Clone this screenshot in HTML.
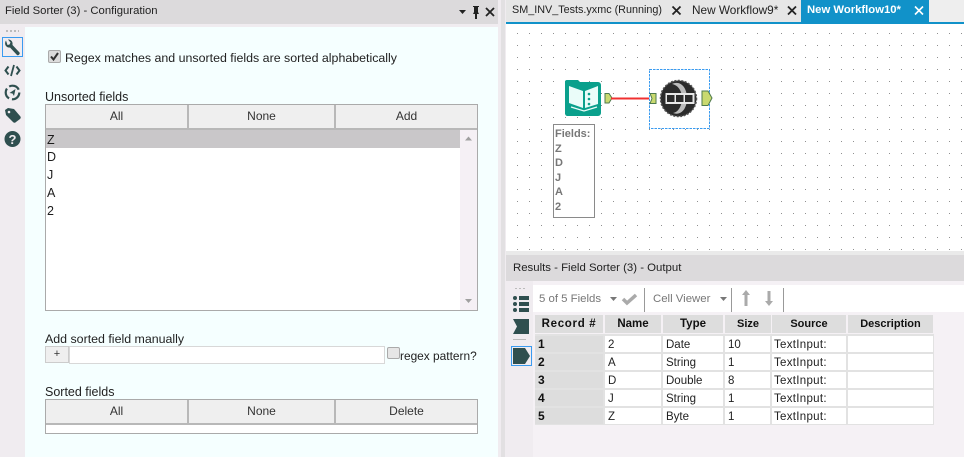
<!DOCTYPE html>
<html><head><meta charset="utf-8"><style>
html,body{margin:0;padding:0;width:964px;height:457px;overflow:hidden;background:#f0ecf0}
body{position:relative;font-family:"Liberation Sans",sans-serif;font-size:12px;color:#1c1c1c}
.a{position:absolute;box-sizing:border-box}
.t{position:absolute;white-space:nowrap;line-height:14px}
.b{position:absolute;box-sizing:border-box;background:#efefef;text-align:center;color:#333;font-size:12px;line-height:22px;height:23px}
.c{position:absolute;box-sizing:border-box;height:16px;background:#fff;font-size:11.5px;line-height:18px;padding-left:3px;color:#222;white-space:nowrap;overflow:hidden}
.s{padding-left:2px;letter-spacing:.3px}
.h{position:absolute;box-sizing:border-box;height:18px;background:#dddddd;font-weight:bold;font-size:11px;line-height:19px;text-align:center;color:#111;white-space:nowrap}
.r{background:#dddddd;font-weight:bold;font-size:12px;color:#111;line-height:16px}
</style></head><body>
<!-- left header -->
<div class="a" style="left:0;top:0;width:501px;height:24px;background:#dcdadc"></div>
<div class="t" style="left:5px;top:4px;font-size:11.300px;color:#222">Field Sorter (3) - Configuration</div>
<svg class="a" style="left:455px;top:2px" width="45" height="20" viewBox="0 0 45 20">
<path d="M4 8h7l-3.500 4z" fill="#222"/>
<path d="M18 4h6v1h-1v5l1 2h-2v5h-2v-5h-2l1-2V5h-1z" fill="#222"/>
<path d="M31 6l8 8M39 6l-8 8" stroke="#222" stroke-width="1.800" fill="none"/>
</svg>
<!-- config panel -->
<div class="a" style="left:25px;top:27px;width:473px;height:430px;background:#f5ffff"></div>
<div class="a" style="left:498px;top:0;width:7px;height:457px;background:#f0ecf0"></div>
<div class="a" style="left:501px;top:0;width:4px;height:457px;background:#e2e0e2"></div>
<!-- sidebar -->
<div class="a" style="left:6px;top:30px;width:13px;height:2px;background-image:linear-gradient(90deg,#bbb 2px,transparent 2px);background-size:4px 2px"></div>
<div class="a" style="left:2px;top:37px;width:21px;height:20px;border:1px solid #3a9bf0"></div>
<svg class="a" style="left:2px;top:37px" width="21" height="125" viewBox="0 0 21 125">
<path d="M4 3.500a4.500 4.500 0 0 0 1 6.500a4.500 4.500 0 0 0 3 .5l7 7.500c1 1 3.500-1 2.500-2.500l-7-7.500a4.500 4.500 0 0 0-.5-3.500a4.500 4.500 0 0 0-4-2l2.500 3l-1 2l-2 .5z" fill="#2f4f4f"/>
<path d="M6.500 29.500l-3 4 3 4M14.500 29.500l3 4-3 4" stroke="#2f4f4f" stroke-width="2" fill="none"/>
<path d="M12 28l-3 11" stroke="#2f4f4f" stroke-width="1.800"/>
<circle cx="10.500" cy="55.500" r="6.800" fill="none" stroke="#2f4f4f" stroke-width="2.200" stroke-dasharray="11.200 3"/>
<path d="M13.500 52l-1.500 7-1.500-2.500-3-.5z" fill="#2f4f4f"/>
<path d="M3 73l3-2 6 1 6 7c1 1 1 2 0 3l-4 3c-1 1-2 1-3 0l-7-7z" fill="#2f4f4f"/>
<circle cx="7" cy="75" r="1.300" fill="#f0ecf0"/>
<circle cx="10.500" cy="102" r="8" fill="#2f4f4f"/>
<text x="10.500" y="107" font-family="Liberation Sans" font-size="13" font-weight="bold" fill="#f0ecf0" text-anchor="middle">?</text>
</svg>
<!-- checkbox -->
<div class="a" style="left:48px;top:50px;width:13px;height:13px;background:#dcdcdc;border:1px solid #aaa;border-radius:2px"></div>
<svg class="a" style="left:48px;top:50px" width="13" height="13"><path d="M3 6.500l2.500 3L10 3" stroke="#333" stroke-width="2" fill="none"/></svg>
<div class="t" style="left:65px;top:51px;font-size:12.400px;color:#222">Regex matches and unsorted fields are sorted alphabetically</div>
<div class="t" style="left:45px;top:90px;font-size:12.500px;color:#222">Unsorted fields</div>
<!-- unsorted -->
<div class="a" style="left:45px;top:104px;width:433px;height:207px;background:#fff;border:1px solid #aaa"></div>
<div class="a" style="left:46px;top:128px;width:431px;height:2px;background:#b8b8b8"></div>
<div class="b" style="left:46px;top:105px;width:141px">All</div>
<div class="a" style="left:187px;top:105px;width:2px;height:23px;background:#b8b8b8"></div>
<div class="b" style="left:189px;top:105px;width:145px">None</div>
<div class="a" style="left:334px;top:105px;width:2px;height:23px;background:#b8b8b8"></div>
<div class="b" style="left:336px;top:105px;width:141px">Add</div>
<div class="a" style="left:46px;top:130px;width:414px;height:18px;background:#c9c7c9"></div>
<div class="a" style="left:460px;top:130px;width:17px;height:180px;background:#f5f0f5"></div>
<svg class="a" style="left:460px;top:130px" width="17" height="180"><path d="M5 10.500h7L8.500 6.500z" fill="#a0a0a0"/><path d="M5 169h7l-3.500 4z" fill="#a0a0a0"/></svg>
<div class="t" style="left:47px;top:133px;font-size:12.500px">Z</div>
<div class="t" style="left:47px;top:150px;font-size:12.500px">D</div>
<div class="t" style="left:47px;top:168px;font-size:12.500px">J</div>
<div class="t" style="left:47px;top:186px;font-size:12.500px">A</div>
<div class="t" style="left:47px;top:204px;font-size:12.500px">2</div>
<!-- manual -->
<div class="t" style="left:45px;top:332px;font-size:12.400px;color:#222">Add sorted field manually</div>
<div class="a" style="left:45px;top:346px;width:24px;height:17px;background:#efefef;border:1px solid #ccc;text-align:center;font-size:11px;line-height:15px;color:#333">+</div>
<div class="a" style="left:69px;top:346px;width:316px;height:18px;background:#fff;border:1px solid #d8d8d8"></div>
<div class="a" style="left:387px;top:347px;width:13px;height:12px;background:#e6e6e6;border:1px solid #aaa;border-radius:2px"></div>
<div class="t" style="left:400px;top:349px;font-size:11.900px;color:#222">regex pattern?</div>
<!-- sorted -->
<div class="t" style="left:45px;top:385px;font-size:12.500px;color:#222">Sorted fields</div>
<div class="a" style="left:45px;top:399px;width:433px;height:35px;background:#fff;border:1px solid #aaa"></div>
<div class="a" style="left:46px;top:423px;width:431px;height:2px;background:#b8b8b8"></div>
<div class="b" style="left:46px;top:400px;width:141px">All</div>
<div class="a" style="left:187px;top:400px;width:2px;height:23px;background:#b8b8b8"></div>
<div class="b" style="left:189px;top:400px;width:145px">None</div>
<div class="a" style="left:334px;top:400px;width:2px;height:23px;background:#b8b8b8"></div>
<div class="b" style="left:336px;top:400px;width:141px">Delete</div>
<!-- tabs -->
<div class="a" style="left:506px;top:0;width:458px;height:22px;background:#e6e6e6"></div>
<div class="a" style="left:929px;top:0;width:35px;height:22px;background:#eeeeee"></div>
<div class="a" style="left:506px;top:22px;width:458px;height:2px;background:#1192c9"></div>
<div class="a" style="left:801px;top:0;width:128px;height:23px;background:#1192c9"></div>
<div class="t" style="left:512px;top:3px;font-size:10.800px;color:#222">SM_INV_Tests.yxmc (Running)</div>
<div class="t" style="left:692px;top:3px;font-size:11.800px;color:#222">New Workflow9*</div>
<div class="t" style="left:807px;top:3px;font-size:11.300px;font-weight:bold;color:#fff">New Workflow10*</div>
<svg class="a" style="left:670px;top:3px" width="255" height="16">
<path d="M2.500 3.500l8 8M10.500 3.500l-8 8" stroke="#222" stroke-width="1.800" fill="none"/>
<path d="M118 3.500l8 8M126 3.500l-8 8" stroke="#222" stroke-width="1.800" fill="none"/>
<path d="M245 3.500l8 8M253 3.500l-8 8" stroke="#fff" stroke-width="1.600" fill="none"/>
</svg>
<!-- canvas -->
<svg class="a" style="left:506px;top:24px" width="458" height="227" viewBox="506 24 458 227">
<defs><pattern id="d" x="1" y="9" width="12" height="12" patternUnits="userSpaceOnUse"><rect width="1" height="1" fill="#909090"/></pattern></defs>
<rect x="506" y="24" width="458" height="227" fill="#fff"/>
<rect x="506" y="24" width="458" height="227" fill="url(#d)"/>
<!-- selection -->
<rect x="649.500" y="69.500" width="60" height="59" fill="#fff" stroke="#3a9bf0" stroke-dasharray="2.500 1"/>
<!-- book tool -->
<path d="M567 80h11l2 2h18a3 3 0 0 1 3 3v28a3 3 0 0 1-3 3h-31a3 3 0 0 1-2-2V82a2 2 0 0 1 2-2z" fill="#0aa08c"/>
<path d="M569 86l14 5v17l-14-5zM585 91l13-5v18l-13 4z" fill="#eafcf9"/>
<circle cx="589" cy="94" r="1.300" fill="#0aa08c"/><circle cx="589" cy="99" r="1.300" fill="#0aa08c"/><circle cx="589" cy="104" r="1.300" fill="#0aa08c"/>
<path d="M571 107l13 4 13-4" stroke="#eafcf9" fill="none" stroke-width="1.200"/>
<!-- connector -->
<path d="M605 93.500h4l3 4.500-3 5h-4z" fill="#c9d96f" stroke="#4e7a4e"/>
<path d="M611 98.500h38" stroke="#f03030" stroke-width="2"/>
<path d="M650 93.500h6v10h-6l2-5z" fill="#c9d96f" stroke="#4e7a4e"/>
<!-- sorter -->
<circle cx="678.500" cy="98.500" r="18" fill="#2b2b2b" stroke="#555" stroke-width="1.500" stroke-dasharray="2 1.500"/>
<path d="M672 84c8-4 15 3 15 14s-6 18-14 15c6-1 9-8 9-15s-4-13-10-14z" fill="#bcbcbc"/>
<rect x="665.500" y="93" width="29" height="11" fill="#e8e8e8"/>
<rect x="667" y="95" width="7.500" height="7" fill="#2b2b2b"/><rect x="676" y="95" width="7.500" height="7" fill="#2b2b2b"/><rect x="685" y="95" width="7.500" height="7" fill="#2b2b2b"/>
<path d="M702 91h6l4 7-4 7.500h-6z" fill="#c9d96f" stroke="#4e7a4e"/>
<!-- annotation -->
<rect x="553.500" y="124.500" width="41" height="93" fill="#fff" stroke="#8a8a8a"/>
<g font-family="Liberation Sans" font-size="11" font-weight="bold" fill="#777">
<text x="555" y="137">Fields:</text><text x="555" y="152">Z</text><text x="555" y="166">D</text><text x="555" y="181">J</text><text x="555" y="195">A</text><text x="555" y="210">2</text>
</g>
</svg>
<!-- results -->
<div class="a" style="left:506px;top:251px;width:458px;height:4px;background:#eaeaea"></div>
<div class="a" style="left:506px;top:255px;width:458px;height:26px;background:#dcdadc"></div>
<div class="t" style="left:513px;top:261px;font-size:11.400px;color:#222">Results - Field Sorter (3) - Output</div>
<div class="a" style="left:506px;top:281px;width:27px;height:176px;background:#f0ecf0"></div>
<div class="a" style="left:533px;top:281px;width:431px;height:176px;background:#f5f1f5"></div>
<div class="a" style="left:533px;top:285px;width:431px;height:27px;background:#fff"></div>
<div class="a" style="left:515px;top:288px;width:11px;height:1px;background-image:linear-gradient(90deg,#bbb 2px,transparent 2px);background-size:4px 1px"></div>
<svg class="a" style="left:510px;top:294px" width="24" height="76">
<g fill="#2f4f4f"><rect x="3" y="2" width="4" height="4" rx="2"/><rect x="9" y="2" width="10" height="4"/><rect x="3" y="8" width="4" height="4" rx="2"/><rect x="9" y="8" width="10" height="4"/><rect x="3" y="14" width="4" height="4" rx="2"/><rect x="9" y="14" width="10" height="4"/>
<path d="M3 25h16v15H3l4-7.500z"/></g>
<path d="M3 45.500h13" stroke="#bbb"/>
<rect x="1.500" y="52.500" width="20" height="19" fill="none" stroke="#3a9bf0"/>
<path d="M3 54h12l5 8-5 8H3z" fill="#2f4f4f"/>
</svg>
<div class="t" style="left:539px;top:292px;font-size:11.400px;color:#777">5 of 5 Fields</div>
<svg class="a" style="left:605px;top:286px" width="190" height="26">
<path d="M5 11h7l-3.500 4z" fill="#777"/>
<path d="M18 13l4 4 9-8" stroke="#aaa" stroke-width="3.500" fill="none"/>
<path d="M39.500 2v24M126.500 2v24M178.500 2v24" stroke="#999"/>
<path d="M115 11h7l-3.500 4z" fill="#777"/>
<path d="M137 9l4-5 4 5h-2.500v11h-3V9z" fill="#aaa"/>
<path d="M160 15l4 5 4-5h-2.500V5h-3v10z" fill="#aaa"/>
</svg>
<div class="t" style="left:653px;top:292px;font-size:11.400px;color:#777">Cell Viewer</div>
<!-- table -->
<div class="a" style="left:535px;top:334px;width:399px;height:91px;background:#e2e2e2"></div>
<div class="a" style="left:535px;top:314px;width:399px;height:20px;background:#f5f1f5"></div>
<div class="h" style="left:535px;top:315px;width:68px;font-size:11.500px;letter-spacing:.7px">Record #</div>
<div class="h" style="left:605px;top:315px;width:56px;font-size:11.500px">Name</div>
<div class="h" style="left:663px;top:315px;width:60px;font-size:11.500px">Type</div>
<div class="h" style="left:725px;top:315px;width:46px">Size</div>
<div class="h" style="left:772px;top:315px;width:74px">Source</div>
<div class="h" style="left:848px;top:315px;width:85px">Description</div>

<div class="c r" style="left:535px;top:336px;width:68px">1</div><div class="c" style="left:605px;top:336px;width:56px">2</div><div class="c" style="left:663px;top:336px;width:60px">Date</div><div class="c" style="left:725px;top:336px;width:45px">10</div><div class="c s" style="left:772px;top:336px;width:74px">TextInput:</div><div class="c" style="left:848px;top:336px;width:85px"></div>
<div class="c r" style="left:535px;top:354px;width:68px">2</div><div class="c" style="left:605px;top:354px;width:56px">A</div><div class="c" style="left:663px;top:354px;width:60px">String</div><div class="c" style="left:725px;top:354px;width:45px">1</div><div class="c s" style="left:772px;top:354px;width:74px">TextInput:</div><div class="c" style="left:848px;top:354px;width:85px"></div>
<div class="c r" style="left:535px;top:372px;width:68px">3</div><div class="c" style="left:605px;top:372px;width:56px">D</div><div class="c" style="left:663px;top:372px;width:60px">Double</div><div class="c" style="left:725px;top:372px;width:45px">8</div><div class="c s" style="left:772px;top:372px;width:74px">TextInput:</div><div class="c" style="left:848px;top:372px;width:85px"></div>
<div class="c r" style="left:535px;top:390px;width:68px">4</div><div class="c" style="left:605px;top:390px;width:56px">J</div><div class="c" style="left:663px;top:390px;width:60px">String</div><div class="c" style="left:725px;top:390px;width:45px">1</div><div class="c s" style="left:772px;top:390px;width:74px">TextInput:</div><div class="c" style="left:848px;top:390px;width:85px"></div>
<div class="c r" style="left:535px;top:408px;width:68px">5</div><div class="c" style="left:605px;top:408px;width:56px">Z</div><div class="c" style="left:663px;top:408px;width:60px">Byte</div><div class="c" style="left:725px;top:408px;width:45px">1</div><div class="c s" style="left:772px;top:408px;width:74px">TextInput:</div><div class="c" style="left:848px;top:408px;width:85px"></div>
</body></html>
